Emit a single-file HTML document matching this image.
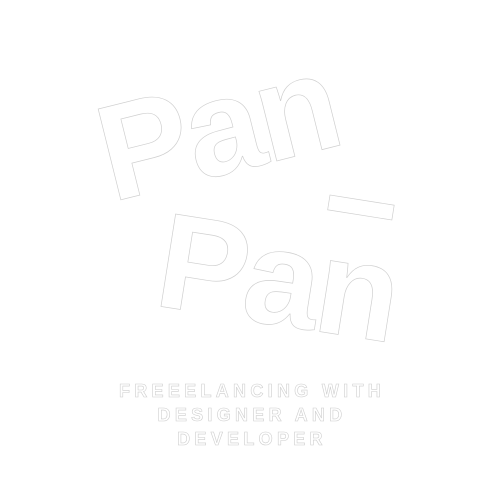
<!DOCTYPE html>
<html><head><style>
html,body{margin:0;padding:0;background:#fff;width:500px;height:500px;overflow:hidden}
</style></head><body>
<svg width="500" height="500" xmlns="http://www.w3.org/2000/svg">
<g font-family="Liberation Sans, sans-serif" fill="#fff" stroke="#cfcfcf" stroke-width="0.7">
<text x="0" y="0" font-size="136" font-weight="bold" letter-spacing="-3" transform="translate(112,202) rotate(-14)">Pan</text>
<text x="0" y="0" font-size="136" font-weight="bold" letter-spacing="-3" transform="translate(152,305) rotate(9)">Pan</text>
<rect x="0" y="0" width="65" height="15" transform="translate(330,195) rotate(9)"/>
<g font-size="18" font-weight="bold" letter-spacing="4.3" text-anchor="middle" stroke-width="0.6">
<text x="252" y="397">FREEELANCING WITH</text>
<text x="252" y="421">DESIGNER AND</text>
<text x="252" y="445">DEVELOPER</text>
</g>
</g>
</svg>
</body></html>
